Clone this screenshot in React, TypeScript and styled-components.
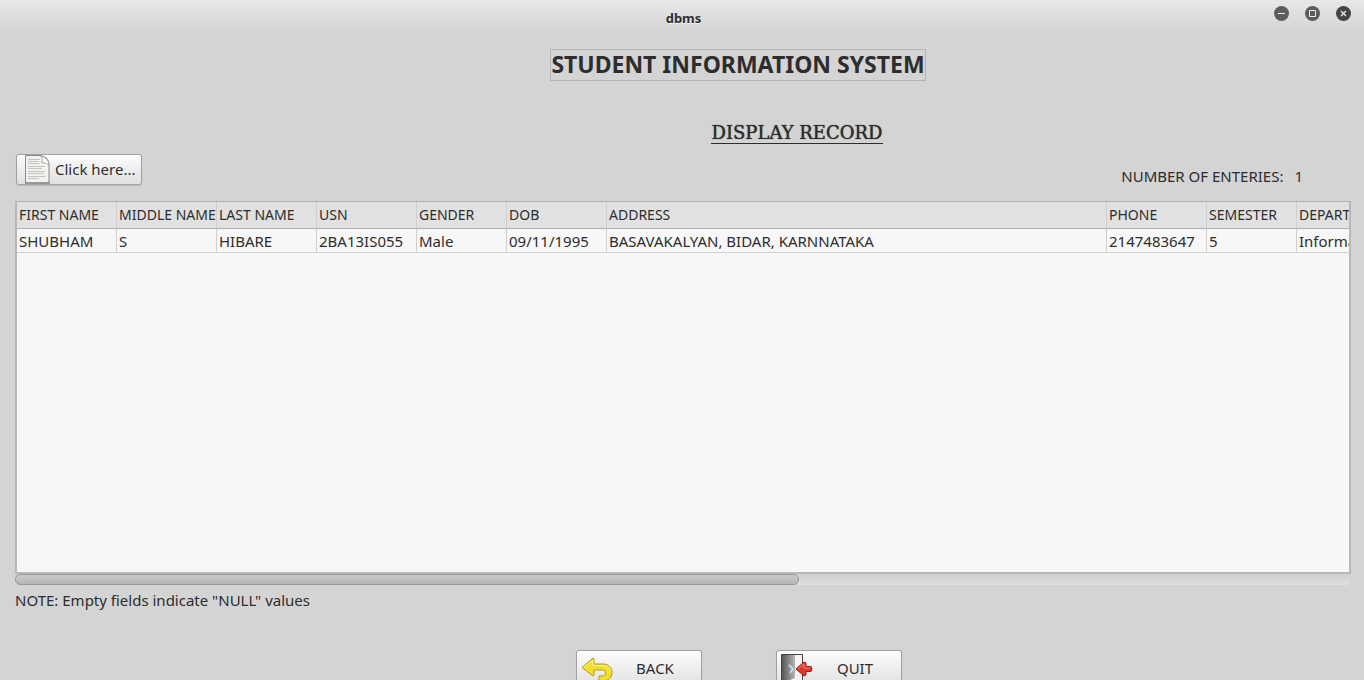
import React from "react";
import styled, { createGlobalStyle, css } from "styled-components";

const GlobalStyle = createGlobalStyle`
  * { box-sizing: border-box; }
  body {
    margin: 0;
    overflow: hidden;
    background: #d4d4d4;
    color: #2d2d2d;
    font: 15px/20px "Noto Sans", sans-serif;
  }
`;

const Window = styled.div`
  display: flex;
  flex-direction: column;
  min-height: 100vh;
  background: linear-gradient(#e8e8e8, #d4d4d4 32px);
`;

const TitleBar = styled.header`
  display: grid;
  grid-template-columns: 1fr auto 1fr;
  align-items: start;
  height: 32px;
  padding: 6px 13px 0 16px;
`;

const WindowTitle = styled.div`
  grid-column: 2;
  padding-top: 2px;
  font-size: 13px;
  font-weight: 700;
  text-shadow: 0 1px 0 #f4f4f4;
`;

const WindowControls = styled.div`
  display: flex;
  justify-content: flex-end;
  gap: 16px;
`;

const WindowButton = styled.button<{ $dark?: boolean }>`
  width: 15px;
  height: 15px;
  padding: 0;
  border: 0;
  border-radius: 50%;
  background: ${(p) => (p.$dark ? "#444" : "#5c5c5c")};
  svg { display: block; }
`;

const Content = styled.main`
  display: flex;
  flex-direction: column;
  padding: 17px 13px 0 15px;
`;

const PageTitle = styled.h1`
  align-self: center;
  margin: 0 0 0 110px;
  padding-bottom: 2px;
  border: 1px solid #b5b5b5;
  font-size: 23px;
  line-height: 28px;
  font-weight: 700;
  white-space: nowrap;
`;

const SectionTitle = styled.h2`
  align-self: center;
  margin: 42px 0 0 228px;
  border-bottom: 1px solid #2d2d2d;
  font: 400 18px/20px "DejaVu Serif", serif;
  text-shadow: 0 0 1px #2d2d2d;
  white-space: nowrap;
`;

const Toolbar = styled.div`
  display: flex;
  justify-content: space-between;
  align-items: flex-start;
  margin-top: 10px;
  padding: 0 48px 15px 1px;
`;

const EntryCount = styled.div`
  display: flex;
  gap: 11px;
  padding-top: 12px;
`;

const raised = css`
  border: 1px solid #a0a0a0;
  border-radius: 3px;
  background: linear-gradient(#fcfcfc, #e0e0e0);
  box-shadow: 0 1px 1px #bcbcbc;
  color: inherit;
  font: inherit;
`;

const LoadButton = styled.button`
  ${raised}
  display: flex;
  align-items: center;
  gap: 5px;
  width: 126px;
  height: 31px;
  padding: 0 0 0 8px;
  white-space: nowrap;
  span { padding-bottom: 2px; }
`;

const ActionButton = styled.button`
  ${raised}
  display: flex;
  align-items: center;
  width: 126px;
  height: 38px;
  padding: 0 4px;
  span {
    flex: 1;
    padding-bottom: 2px;
    text-align: center;
  }
`;

const TablePane = styled.div`
  height: 373px;
  overflow: hidden;
  border: 2px solid #b8b8b8;
  border-top: 1px solid #b0b0b0;
  background: #f7f7f7;
`;

const Table = styled.table`
  table-layout: fixed;
  width: 1480px;
  border-collapse: separate;
  border-spacing: 0;
`;

const cell = css`
  padding: 0 0 0 2px;
  overflow: hidden;
  border-right: 1px solid #d0d0d0;
  font-weight: 400;
  text-align: left;
  white-space: nowrap;
`;

const HeadCell = styled.th`
  ${cell}
  height: 27px;
  border-bottom: 1px solid #b0b0b0;
  background: #e1e1e1;
  font-size: 14px;
`;

const Cell = styled.td`
  ${cell}
  height: 24px;
  border-bottom: 1px solid #d0d0d0;
`;

const ScrollTrack = styled.div`
  height: 11px;
  border-radius: 5px;
  background: linear-gradient(#cfcfcf, #dfdfdf);
`;

const ScrollThumb = styled.div`
  width: 58.7%;
  height: 11px;
  border: 1px solid #999;
  border-radius: 5px;
  background: linear-gradient(#cacaca, #b5b5b5);
`;

const Note = styled.p`
  margin: 5px 0 0;
`;

const Actions = styled.footer`
  display: flex;
  justify-content: center;
  gap: 74px;
  margin-top: 40px;
  padding-left: 112px;
`;

const columns = [
  { title: "FIRST NAME", value: "SHUBHAM", width: 100 },
  { title: "MIDDLE NAME", value: "S", width: 100 },
  { title: "LAST NAME", value: "HIBARE", width: 100 },
  { title: "USN", value: "2BA13IS055", width: 100 },
  { title: "GENDER", value: "Male", width: 90 },
  { title: "DOB", value: "09/11/1995", width: 100 },
  { title: "ADDRESS", value: "BASAVAKALYAN, BIDAR, KARNNATAKA", width: 500 },
  { title: "PHONE", value: "2147483647", width: 100 },
  { title: "SEMESTER", value: "5", width: 90 },
  { title: "DEPARTMENT", value: "Information Science", width: 200 },
];

const DocumentIcon = () => (
  <svg width="25" height="29" viewBox="0 0 25 29" aria-hidden="true">
    <path d="M.5.5h15.500q8 2 8 9v18.500h-23.500z" fill="#f1f1ee" stroke="#8a8a88" />
    <path d="M0 28h25" stroke="#777" />
    <path d="M16 1q2 3 1 7 5-1 7 3 0-8-8-10z" fill="#fff" stroke="#aaa" />
    <path d="M3 4.500h12M3 6.500h11M3 8.500h12M3 11.500h17M3 13.500h14M3 16.500h17M3 18.500h16M3 21.500h17M3 23.500h11" stroke="#c4c4c2" />
  </svg>
);

const BackIcon = () => (
  <svg width="32" height="32" viewBox="0 0 32 32" aria-hidden="true">
    <path
      d="M1 14.500 12 5l1 1v5h9c12 0 12 17 0 17h-4v-5h3c5 0 5-6 0-6h-8v5l-1 1z"
      fill="#f2df2c"
      stroke="#b09a12"
      strokeLinejoin="round"
    />
    <path d="M3 14.500 12 7V12.500h10c6 0 8 4 7 7" fill="none" stroke="#fbf39a" />
  </svg>
);

const QuitIcon = () => (
  <svg width="32" height="32" viewBox="0 0 32 32" aria-hidden="true">
    <defs>
      <linearGradient id="door">
        <stop offset="0" stopColor="#555" />
        <stop offset="1" stopColor="#b5b5b5" />
      </linearGradient>
    </defs>
    <path d="M.5 1.500h21v29H.500z" fill="#f4f4f4" stroke="#444" />
    <path d="M1 2h13v23L1 30z" fill="url(#door)" />
    <path d="m8 12 4 4-3 4" fill="none" stroke="#c4dce2" strokeWidth="2" />
    <path
      d="m15 16 8-7 2 1v3.500h5q2 2.500 0 5h-5V22l-2 1z"
      fill="#e0362c"
      stroke="#9c1c16"
      strokeLinejoin="round"
    />
    <path d="m17 16 6-5v4h6" fill="none" stroke="#f58078" />
  </svg>
);

export default function App() {
  return (
    <Window>
      <GlobalStyle />
      <TitleBar>
        <WindowTitle>dbms</WindowTitle>
        <WindowControls>
          <WindowButton aria-label="Minimize">
            <svg width="15" height="15"><path d="M4 7.500h7" stroke="#eee" /></svg>
          </WindowButton>
          <WindowButton aria-label="Maximize">
            <svg width="15" height="15"><path d="M4.500 4.500h6v6h-6z" fill="none" stroke="#eee" /></svg>
          </WindowButton>
          <WindowButton $dark aria-label="Close">
            <svg width="15" height="15"><path d="m5 5 5 5m0-5-5 5" stroke="#eee" strokeWidth="1.300" /></svg>
          </WindowButton>
        </WindowControls>
      </TitleBar>
      <Content>
        <PageTitle>STUDENT INFORMATION SYSTEM</PageTitle>
        <SectionTitle>DISPLAY RECORD</SectionTitle>
        <Toolbar>
          <LoadButton>
            <DocumentIcon />
            <span>Click here...</span>
          </LoadButton>
          <EntryCount>
            <span>NUMBER OF ENTERIES:</span>
            <span>1</span>
          </EntryCount>
        </Toolbar>
        <TablePane>
          <Table>
            <colgroup>
              {columns.map((c) => (
                <col key={c.title} width={c.width} />
              ))}
            </colgroup>
            <thead>
              <tr>
                {columns.map((c) => (
                  <HeadCell key={c.title} scope="col">{c.title}</HeadCell>
                ))}
              </tr>
            </thead>
            <tbody>
              <tr>
                {columns.map((c) => (
                  <Cell key={c.title}>{c.value}</Cell>
                ))}
              </tr>
            </tbody>
          </Table>
        </TablePane>
        <ScrollTrack>
          <ScrollThumb />
        </ScrollTrack>
        <Note>NOTE: Empty fields indicate "NULL" values</Note>
        <Actions>
          <ActionButton>
            <BackIcon />
            <span>BACK</span>
          </ActionButton>
          <ActionButton>
            <QuitIcon />
            <span>QUIT</span>
          </ActionButton>
        </Actions>
      </Content>
    </Window>
  );
}
